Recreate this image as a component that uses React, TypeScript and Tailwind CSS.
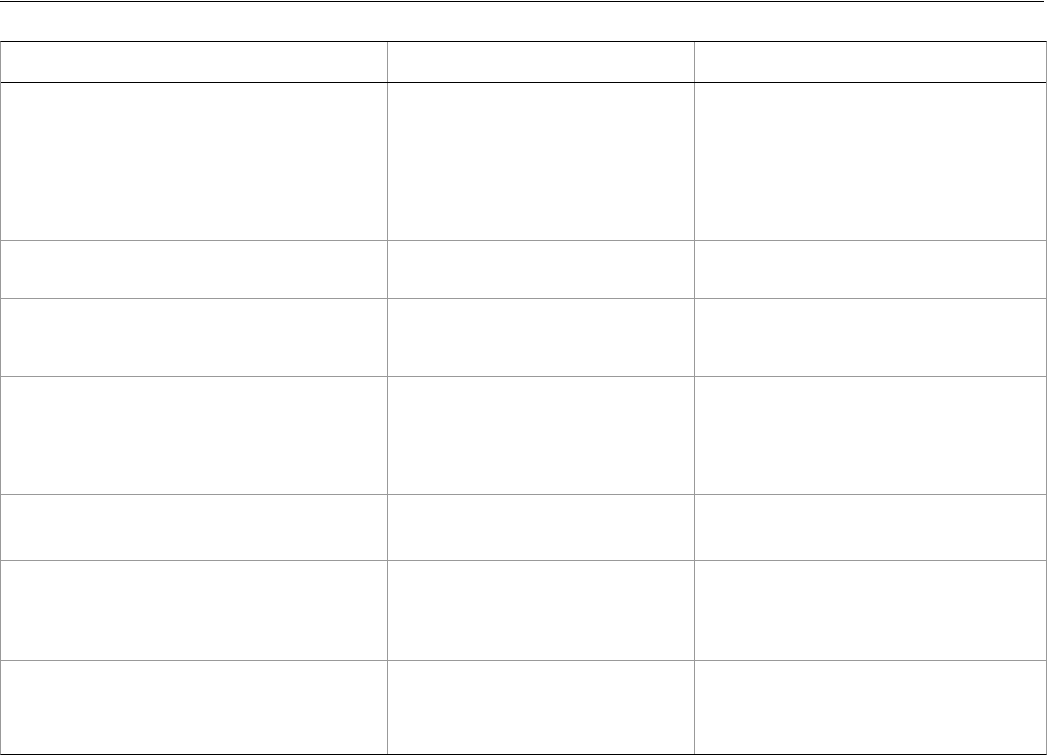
import React from "react";

const rows = [157, 57, 77, 117, 65, 99, 93];

export default function App() {
  return (
    <div className="w-[1047px] h-[755px] bg-white overflow-hidden" style={{ fontFamily: '"Liberation Sans", Arial, sans-serif' }}>
      <div className="h-[1px]" />
      <div className="h-[1px] w-[1044px] bg-black" />
      <div className="h-[39px]" />
      <div className="w-[1047px] border-t border-b border-t-black border-b-black border-l border-r border-l-[#999] border-r-[#999]">
        <div className="flex border-b border-b-black">
          <div className="w-[387px] h-[40px] border-r border-r-[#999]" />
          <div className="w-[307px] h-[40px] border-r border-r-[#999]" />
          <div className="w-[351px] h-[40px]" />
        </div>
        {rows.map((h, i) => (
          <div key={i} className={i < rows.length - 1 ? "flex border-b border-b-[#999]" : "flex"}>
            <div className="w-[387px] border-r border-r-[#999]" style={{ height: h }} />
            <div className="w-[307px] border-r border-r-[#999]" style={{ height: h }} />
            <div className="w-[351px]" style={{ height: h }} />
          </div>
        ))}
      </div>
    </div>
  );
}
